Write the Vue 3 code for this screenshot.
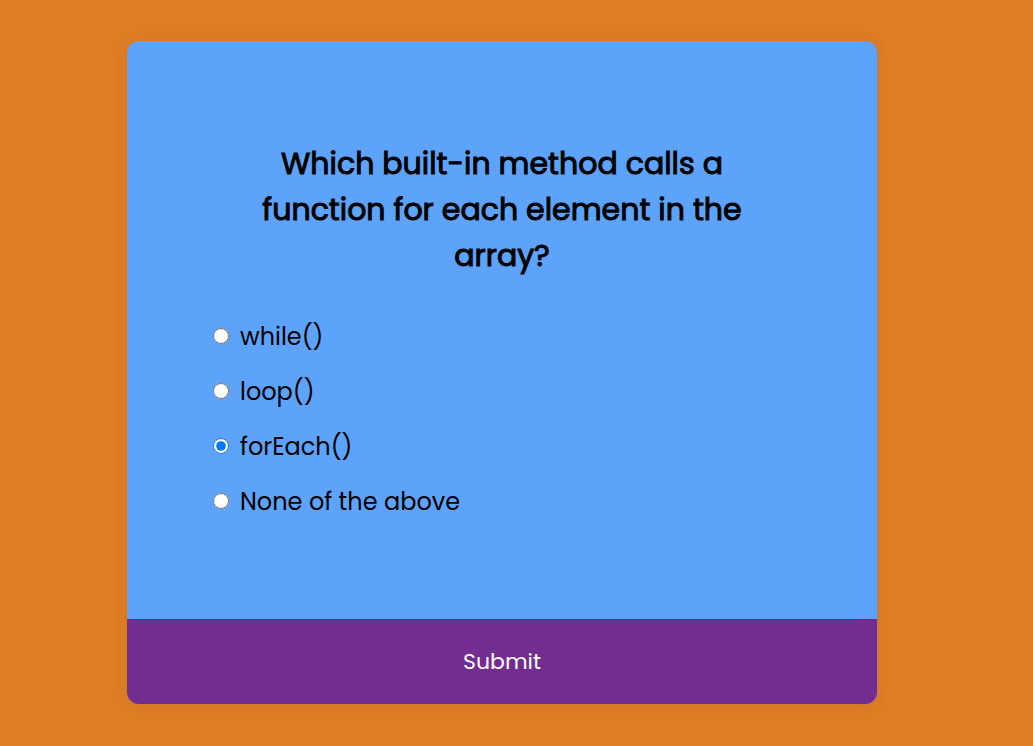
<script setup>
import { ref } from 'vue'

const options = ['while()', 'loop()', 'forEach()', 'None of the above']
const selected = ref('forEach()')
</script>

<template>
  <main class="page">
    <form class="quiz" @submit.prevent>
      <div class="body">
        <h2 id="question">Which built-in method calls a function for each element in the array?</h2>
        <ul role="radiogroup" aria-labelledby="question">
          <li v-for="(option, i) in options" :key="option">
            <input :id="'answer-' + i" v-model="selected" type="radio" name="answer" :value="option" />
            <label :for="'answer-' + i">{{ option }}</label>
          </li>
        </ul>
      </div>
      <button type="submit">Submit</button>
    </form>
  </main>
</template>

<style>
body {
  background: #df7c24;
}
</style>

<style scoped>
.page {
  box-sizing: border-box;
  min-height: 100vh;
  padding: 41px 156px 42px 127px;
  display: flex;
  font-family: Poppins, Lato, "Open Sans", sans-serif;
  color: #000;
}

.quiz {
  flex: 1;
  display: flex;
  flex-direction: column;
  border-radius: 12px;
  overflow: hidden;
  background: #5ea3fa;
  box-shadow: 0 0 10px 2px rgba(100, 100, 100, 0.1);
}

.body {
  flex: 1;
  padding: 100px 80px 0;
}

h2 {
  margin: 0;
  padding: 0 48px;
  font-size: 30px;
  line-height: 46px;
  font-weight: 400;
  -webkit-text-stroke: 1px #000;
  text-align: center;
}

ul {
  list-style: none;
  margin: 29px 0 0;
  padding: 0;
}

li {
  display: flex;
  align-items: center;
  height: 55px;
  padding-left: 6px;
  gap: 11px;
}

input {
  width: 16px;
  height: 16px;
  margin: 0;
}

label {
  padding-top: 2px;
  font-size: 24px;
  line-height: 38px;
  font-weight: 400;
}

button {
  height: 85px;
  border: 0;
  background: #732d91;
  color: #fff;
  font-family: inherit;
  font-size: 22px;
}
</style>
